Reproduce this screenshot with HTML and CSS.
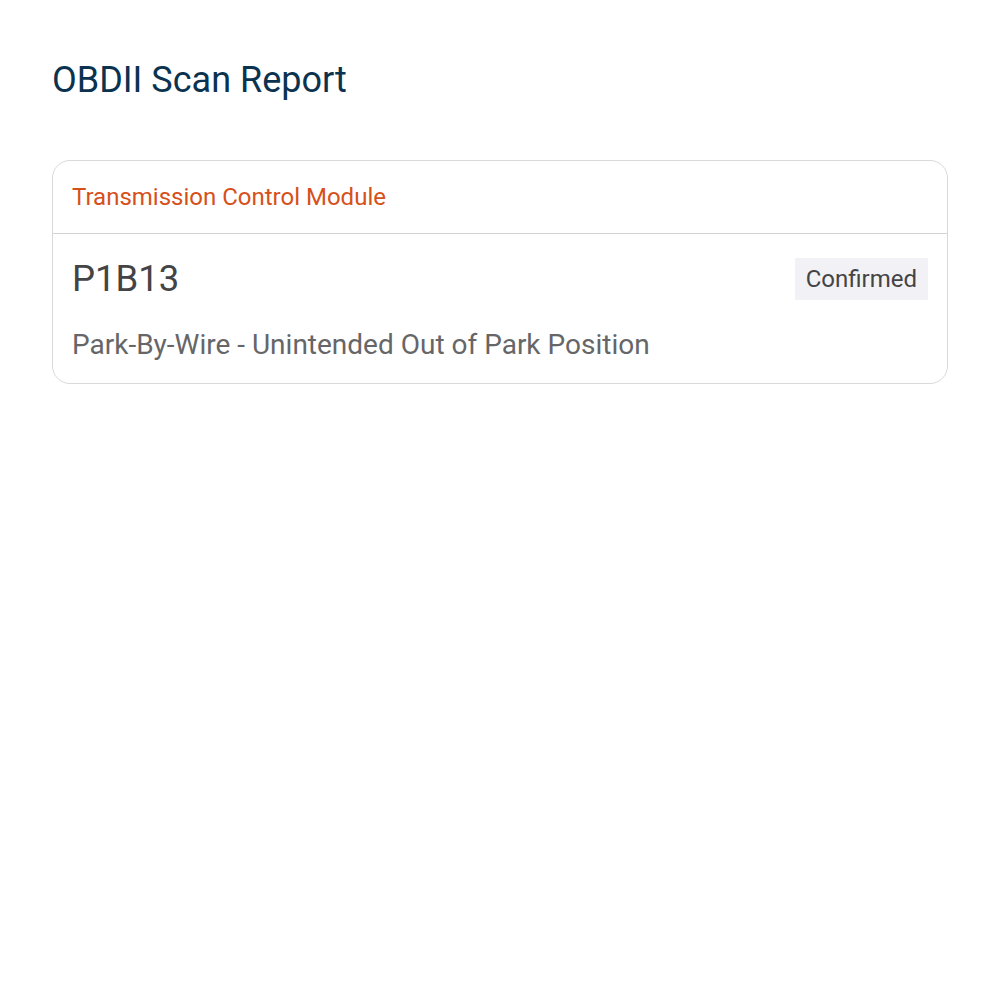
FILE: index.html
```html
<!DOCTYPE html>
<html>
<head>
<meta charset="utf-8">
<link rel="stylesheet" href="styles.css">
</head>
<body>
<main class="page">
  <h1 class="title">OBDII Scan Report</h1>
  <section class="card">
    <header class="card-header">Transmission Control Module</header>
    <div class="card-body">
      <div class="code-row">
        <span class="code">P1B13</span>
        <span class="badge">Confirmed</span>
      </div>
      <p class="desc">Park-By-Wire - Unintended Out of Park Position</p>
    </div>
  </section>
</main>
</body>
</html>
```
FILE: styles.css
```css
html, body {
  margin: 0;
  padding: 0;
  background: #ffffff;
  font-family: Roboto, "Liberation Sans", sans-serif;
}
.page {
  padding: 52px 52px;
}
.title {
  margin: 0 0 52px 0;
  font-size: 36px;
  font-weight: 400;
  line-height: 56px;
  color: #0b3350;
}
.card {
  border: 1px solid #d9d9dc;
  border-radius: 18px;
}
.card-header {
  padding: 0 19px;
  height: 72px;
  display: flex;
  align-items: center;
  font-size: 24px;
  color: #d6501a;
  border-bottom: 1px solid #d3d3d6;
}
.card-body {
  padding: 23px 19px 21px 19px;
}
.code-row {
  display: flex;
  justify-content: space-between;
  align-items: center;
}
.code {
  font-size: 36.5px;
  color: #444447;
}
.badge {
  background: #f2f2f6;
  color: #444447;
  font-size: 24px;
  padding: 0 11px;
  height: 42px;
  display: flex;
  align-items: center;
}
.desc {
  margin: 28px 0 0 0;
  font-size: 28px;
  line-height: 34px;
  color: #666668;
}
```
